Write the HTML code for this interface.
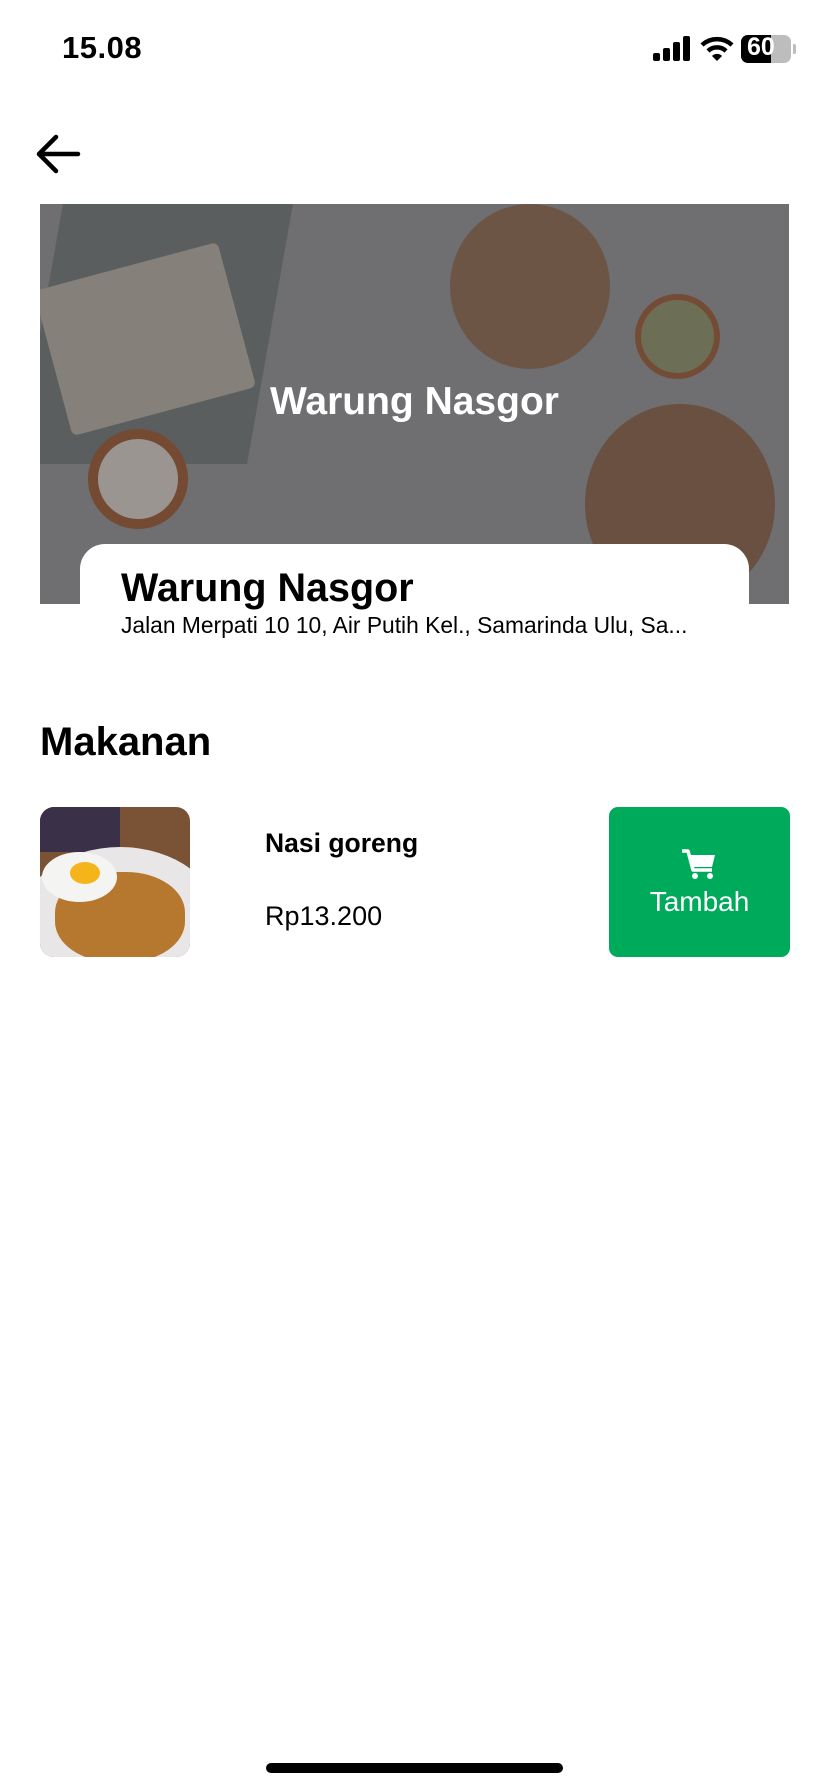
<!DOCTYPE html>
<html><head><meta charset="utf-8">
<style>
*{margin:0;padding:0;box-sizing:border-box}
body{width:828px;height:1792px;background:#fff;font-family:"Liberation Sans",Arial,sans-serif;position:relative;overflow:hidden;color:#000}
.abs{position:absolute}
</style></head><body>
<div class="abs" style="left:62px;top:30px;font-size:31px;font-weight:600;letter-spacing:0.5px">15.08</div>
<div class="abs" style="left:653px;top:53px;width:7px;height:8px;background:#000;border-radius:2px"></div>
<div class="abs" style="left:663px;top:48px;width:7px;height:13px;background:#000;border-radius:2px"></div>
<div class="abs" style="left:673px;top:42px;width:7px;height:19px;background:#000;border-radius:2px"></div>
<div class="abs" style="left:683px;top:36px;width:7px;height:25px;background:#000;border-radius:2px"></div>
<svg class="abs" style="left:700px;top:36px" width="34" height="26" viewBox="0 0 34 26"><path d="M2 9 A22 22 0 0 1 32 9" stroke="#000" stroke-width="4.5" fill="none"/><path d="M8 15 A13 13 0 0 1 26 15" stroke="#000" stroke-width="4.5" fill="none"/><path d="M12 20 L17 25 L22 20 A7 7 0 0 0 12 20Z" fill="#000"/></svg>
<div class="abs" style="left:741px;top:35px;width:50px;height:28px;background:#bdbdbd;border-radius:7px;overflow:hidden"><div style="width:30px;height:28px;background:#000"></div></div>
<div class="abs" style="left:793px;top:44px;width:3px;height:10px;background:#bdbdbd;border-radius:0 2px 2px 0"></div>
<div class="abs" style="left:747px;top:33px;font-size:25px;font-weight:700;color:#fff">60</div>
<svg class="abs" style="left:35px;top:132px" width="46" height="44" viewBox="0 0 46 44"><path d="M43 22 H5 M21 5 L4 22 L21 39" stroke="#000" stroke-width="4.5" fill="none" stroke-linecap="round" stroke-linejoin="round"/></svg>
<div class="abs" style="left:40px;top:204px;width:749px;height:400px;background:#6f6e70;overflow:hidden">
 <div class="abs" style="left:0;top:0;width:230px;height:260px;background:#5a5e5f;transform:skewX(-10deg)"></div>
 <div class="abs" style="left:10px;top:60px;width:190px;height:150px;background:#86807a;transform:rotate(-15deg);border-radius:6px"></div>
 <div class="abs" style="left:410px;top:0;width:160px;height:165px;background:#6d5545;border-radius:50%"></div>
 <div class="abs" style="left:595px;top:90px;width:85px;height:85px;background:#6c6e55;border-radius:50%;border:6px solid #744c35"></div>
 <div class="abs" style="left:48px;top:225px;width:100px;height:100px;background:#9a9590;border-radius:50%;border:10px solid #744a33"></div>
 <div class="abs" style="left:545px;top:200px;width:190px;height:200px;background:#6a5040;border-radius:50%"></div>
 <div class="abs" style="left:0;top:176px;width:749px;text-align:center;color:#fff;font-size:39px;font-weight:700">Warung Nasgor</div>
</div>
<div class="abs" style="left:80px;top:544px;width:669px;height:100px;background:#fff;border-radius:25px 25px 0 0"></div>
<div class="abs" style="left:121px;top:566px;font-size:39.5px;font-weight:700">Warung Nasgor</div>
<div class="abs" style="left:121px;top:612px;font-size:22.8px">Jalan Merpati 10 10, Air Putih Kel., Samarinda Ulu, Sa...</div>
<div class="abs" style="left:40px;top:720px;font-size:40px;font-weight:700">Makanan</div>
<div class="abs" style="left:40px;top:807px;width:150px;height:150px;border-radius:14px;overflow:hidden;background:#7a5236">
 <div class="abs" style="left:0;top:0;width:80px;height:45px;background:#3a3048"></div>
 <div class="abs" style="left:-20px;top:40px;width:200px;height:150px;background:#e8e6e6;border-radius:50%"></div>
 <div class="abs" style="left:15px;top:65px;width:130px;height:90px;background:#b5782e;border-radius:45%"></div>
 <div class="abs" style="left:2px;top:45px;width:75px;height:50px;background:#f4f4f2;border-radius:50%"></div>
 <div class="abs" style="left:30px;top:55px;width:30px;height:22px;background:#f5b51a;border-radius:50%"></div>
</div>
<div class="abs" style="left:265px;top:828px;font-size:26.5px;font-weight:700">Nasi goreng</div>
<div class="abs" style="left:265px;top:901px;font-size:27px">Rp13.200</div>
<div class="abs" style="left:609px;top:807px;width:181px;height:150px;background:#00aa5b;border-radius:9px"></div>
<svg class="abs" style="left:681px;top:848px" width="36" height="32" viewBox="0 0 36 32"><path d="M1 3 H7 L12 22 H31" stroke="#fff" stroke-width="3.5" fill="none" stroke-linejoin="round"/><path d="M8 7 H34 L31 19 H11 Z" fill="#fff"/><circle cx="14" cy="28" r="3" fill="#fff"/><circle cx="29" cy="28" r="3" fill="#fff"/></svg>
<div class="abs" style="left:609px;top:886px;width:181px;text-align:center;color:#fff;font-size:28px">Tambah</div>
<div class="abs" style="left:266px;top:1763px;width:297px;height:10px;background:#000;border-radius:5px"></div>
</body></html>
